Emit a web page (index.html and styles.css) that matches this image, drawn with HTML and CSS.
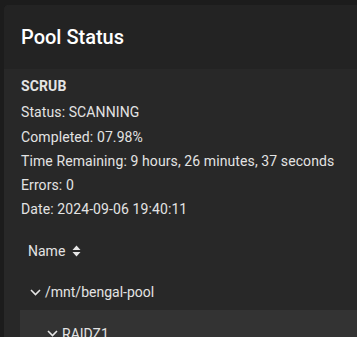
FILE: index.html
```html
<!DOCTYPE html>
<html lang="en">
<head>
    <meta charset="UTF-8">
    <meta name="viewport" content="width=device-width, initial-scale=1.0">
    <title>Pool Status</title>
    <link rel="stylesheet" href="styles.css">
</head>
<body>
    <div class="card">
        <div class="card-header">
            <h1 class="card-title">Pool Status</h1>
        </div>
        <div class="card-body">
            <div class="scrub">
                <div class="scrub-title">SCRUB</div>
                <div>Status: SCANNING</div>
                <div>Completed: 07.98%</div>
                <div>Time Remaining: 9 hours, 26 minutes, 37 seconds</div>
                <div>Errors: 0</div>
                <div>Date: 2024-09-06 19:40:11</div>
            </div>
            <div class="tree">
                <div class="tree-head">
                    <span>Name</span>
                    <svg class="sort-icon" width="9" height="12" viewBox="0 0 9 12">
                        <path d="M4.5 0.5 L8.5 5 L0.5 5 Z M0.5 7 L8.5 7 L4.5 11.5 Z" fill="#e6e6e6"/>
                    </svg>
                </div>
                <div class="tree-row level-0">
                    <svg class="chevron" width="11" height="7" viewBox="0 0 11 7">
                        <path d="M1 1 L5.5 5.5 L10 1" fill="none" stroke="#e6e6e6" stroke-width="1.6"/>
                    </svg>
                    <span>/mnt/bengal-pool</span>
                </div>
                <div class="tree-row level-1 selected">
                    <svg class="chevron" width="11" height="7" viewBox="0 0 11 7">
                        <path d="M1 1 L5.5 5.5 L10 1" fill="none" stroke="#e6e6e6" stroke-width="1.6"/>
                    </svg>
                    <span>RAIDZ1</span>
                </div>
            </div>
        </div>
    </div>
</body>
</html>
```

FILE: styles.css
```css
:root {
    --bg-page: #1c1c1c;
    --bg-header: #232323;
    --bg-card: #282828;
    --bg-selected: #333333;
    --text-primary: #ffffff;
    --text-secondary: #e3e3e3;
}

* {
    margin: 0;
    padding: 0;
    box-sizing: border-box;
}

body {
    font-family: Roboto, "Liberation Sans", sans-serif;
    background: var(--bg-page);
    color: var(--text-secondary);
    padding: 5px 0 0 4px;
    height: 337px;
    overflow: hidden;
}

.card {
    background: var(--bg-card);
    border-radius: 5px 0 0 0;
    overflow: hidden;
    height: 332px;
}

.card-header {
    background: var(--bg-header);
    height: 64px;
    display: flex;
    align-items: center;
    padding-left: 17px;
}

.card-title {
    font-size: 20px;
    font-weight: 500;
    color: var(--text-primary);
}

.card-body {
    padding: 5px 0 0 0;
}

.scrub {
    padding-left: 17px;
    font-size: 14px;
    line-height: 24.25px;
    letter-spacing: 0.1px;
}

.scrub-title {
    font-weight: 700;
    margin-bottom: 2px;
}

.tree {
    margin: 5px 0 0 16px;
    font-size: 14px;
}

.tree-head {
    height: 48px;
    display: flex;
    align-items: center;
    gap: 7px;
    padding-left: 8px;
}

.sort-icon {
    display: block;
}

.tree-row {
    height: 35px;
    display: flex;
    align-items: center;
    gap: 4px;
}

.chevron {
    display: block;
}

.level-0 {
    padding-left: 10px;
}

.level-1 {
    padding-left: 27px;
    height: 48px;
}

.selected {
    background: var(--bg-selected);
}
```
